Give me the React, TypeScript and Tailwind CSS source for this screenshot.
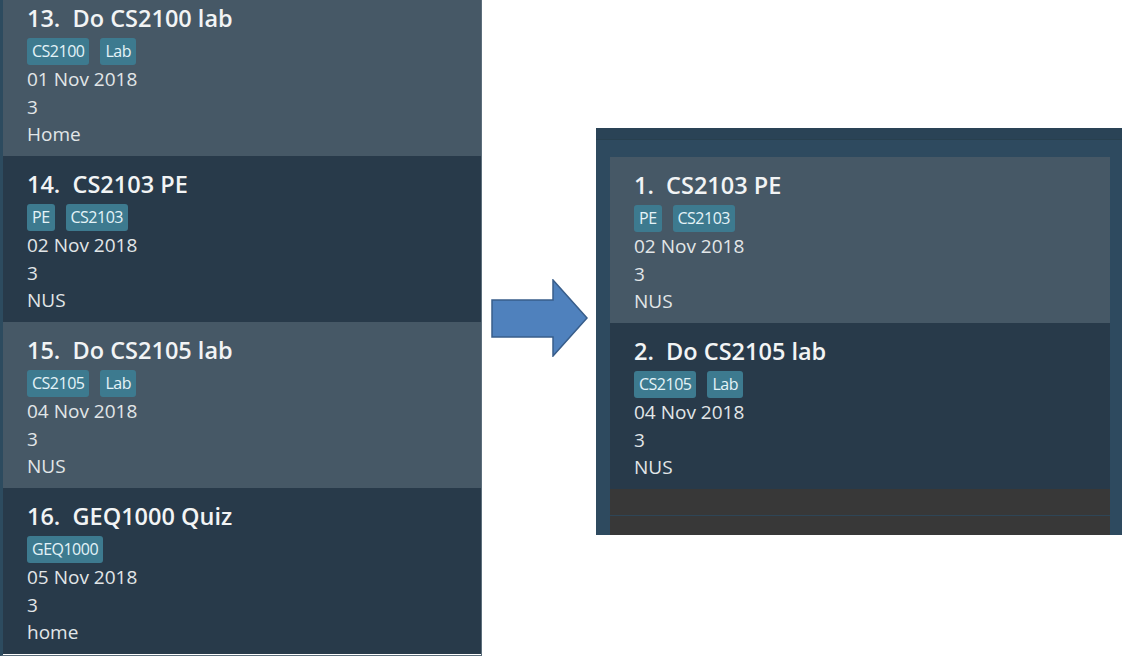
import React from 'react';

type Task = {
  index: number;
  title: string;
  tags: string[];
  date: string;
  priority: string;
  venue: string;
};

const LEFT_TASKS: Task[] = [
  { index: 13, title: 'Do CS2100 lab', tags: ['CS2100', 'Lab'], date: '01 Nov 2018', priority: '3', venue: 'Home' },
  { index: 14, title: 'CS2103 PE', tags: ['PE', 'CS2103'], date: '02 Nov 2018', priority: '3', venue: 'NUS' },
  { index: 15, title: 'Do CS2105 lab', tags: ['CS2105', 'Lab'], date: '04 Nov 2018', priority: '3', venue: 'NUS' },
  { index: 16, title: 'GEQ1000 Quiz', tags: ['GEQ1000'], date: '05 Nov 2018', priority: '3', venue: 'home' },
];

const RIGHT_TASKS: Task[] = [
  { index: 1, title: 'CS2103 PE', tags: ['PE', 'CS2103'], date: '02 Nov 2018', priority: '3', venue: 'NUS' },
  { index: 2, title: 'Do CS2105 lab', tags: ['CS2105', 'Lab'], date: '04 Nov 2018', priority: '3', venue: 'NUS' },
];

const font = { fontFamily: '"Open Sans", "Noto Sans", sans-serif' };

const TaskCard: React.FC<{ task: Task; light: boolean }> = ({ task, light }) => (
  <div
    className={`h-[166px] shrink-0 pl-6 pt-[12px] flex flex-col text-[#e2e6e8] ${
      light ? 'bg-[#465866]' : 'bg-[#283a4a]'
    }`}
  >
    {/* title row */}
    <div className="text-[23.5px] leading-[32px] font-semibold text-[#f2f4f5] whitespace-pre">
      {`${task.index}.  ${task.title}`}
    </div>
    <div className="flex gap-[11px] mt-[4px]">
      {task.tags.map(tag => (
        <span
          key={tag}
          className="h-[27px] px-[5px] rounded-[3px] bg-[#3d7a8f] text-[#e4f3f8] text-[16px] leading-[27px] tracking-[-0.5px]"
        >
          {tag}
        </span>
      ))}
    </div>
    <div className="text-[19px] leading-[27.5px] mt-[1px]">{task.date}</div>
    <div className="text-[19px] leading-[27.5px]">{task.priority}</div>
    <div className="text-[19px] leading-[27.5px]">{task.venue}</div>
  </div>
);

const Arrow: React.FC = () => (
  <svg width="97" height="78" viewBox="0 0 97 78" className="block">
    <polygon
      points="1,21 62,21 62,1 96,39 62,77 62,58 1,58"
      fill="#4f81bd"
      stroke="#385d8a"
      strokeWidth="1.5"
      strokeLinejoin="miter"
    />
  </svg>
);

const App: React.FC = () => {
  return (
    <div className="w-[1125px] h-[660px] bg-white flex items-start overflow-hidden" style={font}>
      {/* Before: full task list */}
      <div className="w-[482px] h-[656px] shrink-0 overflow-hidden border-l-[3px] border-r border-b border-l-[#2d4b5f] border-r-[#5d6f7c] border-b-[#5d6f7c] flex flex-col">
        <div className="-mt-[10px] flex flex-col">
          {LEFT_TASKS.map((t, i) => (
            <TaskCard key={t.index} task={t} light={i % 2 === 0} />
          ))}
        </div>
      </div>

      {/* Arrow */}
      <div className="ml-[9px] mt-[279px] shrink-0">
        <Arrow />
      </div>

      {/* After: filtered list */}
      <div className="ml-[8px] mt-[128px] w-[526px] h-[407px] shrink-0 bg-[#2e4a5f] flex flex-col">
        <div className="h-[12px] bg-[#2a4356] border-b border-[#28404f]" />
        <div className="flex-1 flex flex-col pt-[17px] pl-[14px] pr-[12px] overflow-hidden">
          {RIGHT_TASKS.map((t, i) => (
            <TaskCard key={t.index} task={t} light={i % 2 === 0} />
          ))}
          <div className="h-[27px] shrink-0 bg-[#383838] border-b border-[#2e4556]" />
          <div className="flex-1 bg-[#383838]" />
        </div>
      </div>
    </div>
  );
};

export default App;
